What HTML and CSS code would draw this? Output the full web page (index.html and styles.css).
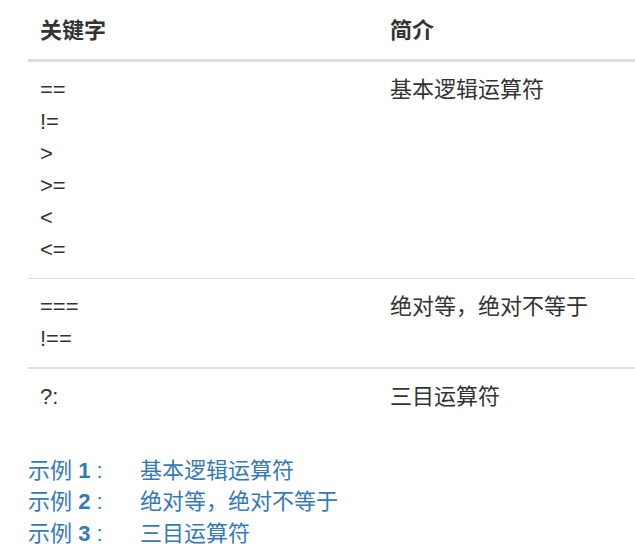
FILE: index.html
```html
<!DOCTYPE html>
<html lang="zh">
<head>
<meta charset="utf-8">
<link rel="stylesheet" href="styles.css">
</head>
<body>
<div class="page">
  <table class="ops">
    <thead>
      <tr><th class="col-key">关键字</th><th>简介</th></tr>
    </thead>
    <tbody>
      <tr><td>==<br>!=<br>&gt;<br>&gt;=<br>&lt;<br>&lt;=</td><td>基本逻辑运算符</td></tr>
      <tr><td>===<br>!==</td><td>绝对等，绝对不等于</td></tr>
      <tr><td>?:</td><td>三目运算符</td></tr>
    </tbody>
  </table>
  <ul class="examples">
    <li><a href="#" class="ex"><span class="label">示例 <b>1</b> :</span><span>基本逻辑运算符</span></a></li>
    <li><a href="#" class="ex"><span class="label">示例 <b>2</b> :</span><span>绝对等，绝对不等于</span></a></li>
    <li><a href="#" class="ex"><span class="label">示例 <b>3</b> :</span><span>三目运算符</span></a></li>
  </ul>
</div>
</body>
</html>
```

FILE: styles.css
```css
html, body {
  margin: 0;
  padding: 0;
  background: #fff;
}
body {
  font-family: "Liberation Sans", Arial, "Noto Sans CJK SC", sans-serif;
  font-size: 22px;
  line-height: 31.43px;
  color: #333;
}
.page {
  padding: 3px 0 0 28px;
}
.ops {
  border-collapse: collapse;
  width: 607px;
  margin-bottom: 30px;
}
.ops th, .ops td {
  padding: 12px 12px;
  line-height: 32px;
  text-align: left;
  vertical-align: top;
}
.ops th {
  font-weight: bold;
  border-bottom: 3px solid #ddd;
}
.ops .col-key {
  width: 326px;
}
.ops tbody tr + tr td {
  border-top: 1px solid #ddd;
}
.ops tbody tr:nth-child(3) td {
  border-top: 2px solid #ddd;
}
.examples {
  list-style: none;
  margin: 0;
  padding: 0;
}
.ex {
  color: #337ab7;
  text-decoration: none;
  display: flex;
}
.ex .label {
  width: 112px;
  flex: none;
}
.ex b {
  font-weight: bold;
}
```
